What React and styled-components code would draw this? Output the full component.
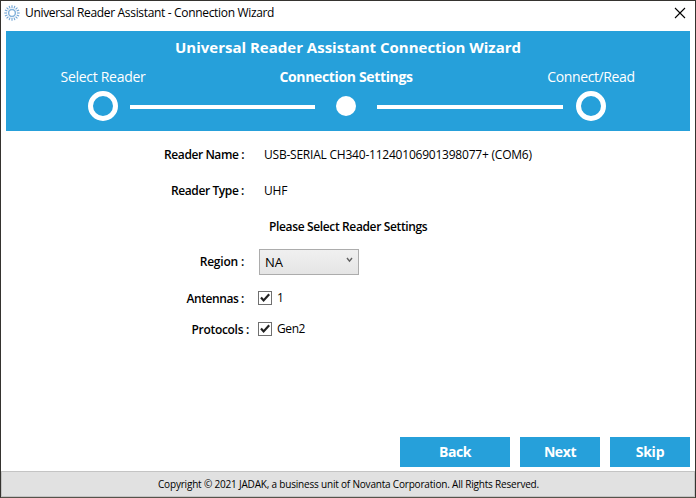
import React, { useState } from "react";
import styled, { createGlobalStyle } from "styled-components";

const BLUE = "#26a0da";

const GlobalStyle = createGlobalStyle`
  *, *::before, *::after { box-sizing: border-box; }
  body { margin: 0; background: #fff; }
  button { font: inherit; }
`;

const Window = styled.div`
  width: 696px;
  height: 498px;
  display: flex;
  flex-direction: column;
  border: 1px solid #35332f;
  border-bottom-color: #56534a;
  background: #fff;
  color: #000;
  font-family: "Open Sans", "Noto Sans", sans-serif;
  font-size: 12px;
  white-space: nowrap;
  overflow: hidden;
`;

const Text = styled.span`
  letter-spacing: ${(p) => p.$spacing || 0}px;
`;

const TitleBar = styled.header`
  height: 30px;
  flex: none;
  display: flex;
  align-items: flex-start;
  padding: 3px 9px 0 3px;
`;

const AppIcon = styled.svg`
  width: 16px;
  height: 16px;
  margin-top: 1px;
`;

const Title = styled.h1`
  margin: 0 auto 0 5px;
  font-size: 12px;
  font-weight: 400;
  line-height: 18px;
`;

const CloseButton = styled.button`
  width: 12px;
  height: 12px;
  margin-top: 3px;
  padding: 0;
  border: 0;
  background: none;
  svg { display: block; }
`;

const Banner = styled.section`
  height: 100px;
  flex: none;
  margin: 0 5px;
  background: ${BLUE};
  color: #fff;
`;

const BannerTitle = styled.h2`
  margin: 0;
  padding-top: 5px;
  font-size: 15px;
  font-weight: 700;
  line-height: 22px;
  text-align: center;
`;

const Steps = styled.div`
  display: grid;
  grid-template-columns: 194px 292px 198px;
  margin-top: 9px;
  font-size: 14px;
  line-height: 20px;
  text-align: center;
`;

const StepLabel = styled.div`
  font-weight: ${(p) => (p.$current ? 700 : 400)};
`;

const Track = styled.div`
  display: flex;
  align-items: center;
  height: 30px;
  margin-top: 4px;
  padding-left: 82px;
`;

const Ring = styled.div`
  width: 30px;
  height: 30px;
  border: 5px solid #fff;
  border-radius: 50%;
`;

const Dot = styled.div`
  width: 20px;
  height: 20px;
  border-radius: 50%;
  background: #fff;
`;

const Line = styled.div`
  width: ${(p) => p.$width}px;
  height: 4px;
  margin: 1px ${(p) => p.$right}px 0 ${(p) => p.$left}px;
  background: #fff;
`;

const Form = styled.main`
  flex: 1;
  display: grid;
  grid-template-columns: 243px 1fr;
  grid-template-rows: 36px 36px 36px 35px 38px 24px;
  padding-top: 5px;
  align-items: center;
`;

const Label = styled.div`
  justify-self: end;
  margin-right: ${(p) => p.$shift || 0}px;
  font-weight: 600;
`;

const Value = styled.div`
  padding-left: 20px;
`;

const FormHeading = styled.div`
  grid-column: 2;
  padding-left: 25px;
  font-weight: 600;
`;

const Select = styled.button`
  display: flex;
  align-items: center;
  justify-content: space-between;
  width: 100px;
  height: 26px;
  margin-left: 15px;
  padding: 0 5px;
  border: 1px solid #acacac;
  background: linear-gradient(#f0f0f0, #e5e5e5);
  color: #000;
  font-size: 13px;
`;

const Chevron = styled.svg`
  width: 7px;
  height: 6px;
  margin-top: -3px;
`;

const CheckRow = styled.label`
  display: flex;
  align-items: center;
  gap: 5px;
  margin: -1px 0 0 14px;
`;

const Box = styled.button`
  width: 14px;
  height: 14px;
  padding: 0;
  border: 1px solid #707070;
  background: #fff;
  svg { display: block; }
`;

const Actions = styled.div`
  display: flex;
  justify-content: flex-end;
  gap: 10px;
  padding: 0 5px 4px 0;
`;

const Action = styled.button`
  width: ${(p) => p.$width}px;
  height: 30px;
  padding: 0 0 1px;
  border: 0;
  background: ${BLUE};
  color: #fff;
  font-size: 14px;
  font-weight: 700;
`;

const Footer = styled.footer`
  height: 26px;
  flex: none;
  border: 1px solid #c4c4c4;
  background: #e1e1e1;
  font-size: 10px;
  line-height: 24px;
  text-align: center;
  padding-left: 1px;
`;

const rays = Array.from({ length: 16 }, (_, i) => i * 22.5);

function Sunburst() {
  return (
    <AppIcon viewBox="0 0 16 16">
      <circle cx="8" cy="8" r="3.4" fill="none" stroke="#86b4dc" strokeWidth="1.5" />
      {rays.map((angle) => (
        <line key={angle} x1="8" y1="3" x2="8" y2="0.3" stroke="#6fa3d4"
          strokeWidth="1.1" transform={`rotate(${angle} 8 8)`} />
      ))}
    </AppIcon>
  );
}

function Checkbox({ label, spacing }) {
  const [checked, setChecked] = useState(true);
  return (
    <CheckRow>
      <Box type="button" onClick={() => setChecked(!checked)}>
        {checked && (
          <svg width="12" height="12" viewBox="0 0 12 12">
            <path d="M2 5.5 L4.6 8.4 L10.2 2.3" fill="none" stroke="#212121" strokeWidth="2.2" />
          </svg>
        )}
      </Box>
      <Text $spacing={spacing}>{label}</Text>
    </CheckRow>
  );
}

export default function App() {
  return (
    <>
      <GlobalStyle />
      <Window>
        <TitleBar>
          <Sunburst />
          <Title>
            <Text $spacing={-0.33}>Universal Reader Assistant - Connection Wizard</Text>
          </Title>
          <CloseButton type="button" aria-label="Close">
            <svg width="12" height="12" viewBox="0 0 12 12">
              <path d="M1 1 L11 11 M11 1 L1 11" stroke="#000" strokeWidth="1.1" />
            </svg>
          </CloseButton>
        </TitleBar>

        <Banner>
          <BannerTitle>
            <Text>Universal Reader Assistant Connection Wizard</Text>
          </BannerTitle>
          <Steps>
            <StepLabel><Text $spacing={-0.3}>Select Reader</Text></StepLabel>
            <StepLabel $current><Text $spacing={-0.35}>Connection Settings</Text></StepLabel>
            <StepLabel><Text $spacing={-0.38}>Connect/Read</Text></StepLabel>
          </Steps>
          <Track>
            <Ring />
            <Line $width={185} $left={12} $right={21} />
            <Dot />
            <Line $width={186} $left={21} $right={13} />
            <Ring />
          </Track>
        </Banner>

        <Form>
          <Label><Text $spacing={-0.42}>Reader Name :</Text></Label>
          <Value>
            <Text $spacing={-0.22}>USB-SERIAL CH340-11240106901398077+ (COM6)</Text>
          </Value>
          <Label><Text $spacing={-0.4}>Reader Type :</Text></Label>
          <Value><Text $spacing={-0.2}>UHF</Text></Value>
          <FormHeading><Text $spacing={-0.36}>Please Select Reader Settings</Text></FormHeading>
          <Label><Text $spacing={-0.2}>Region :</Text></Label>
          <Select type="button">
            NA
            <Chevron viewBox="0 0 7 6">
              <path d="M1 1 L3.5 4.2 L6 1" fill="none" stroke="#606060" strokeWidth="1.4" />
            </Chevron>
          </Select>
          <Label><Text $spacing={-0.42}>Antennas :</Text></Label>
          <Checkbox label="1" />
          <Label $shift={-5}><Text $spacing={-0.3}>Protocols :</Text></Label>
          <Checkbox label="Gen2" spacing={-0.4} />
        </Form>

        <Actions>
          <Action type="button" $width={110}><Text $spacing={-0.4}>Back</Text></Action>
          <Action type="button" $width={80}><Text $spacing={-0.4}>Next</Text></Action>
          <Action type="button" $width={80}><Text $spacing={-0.2}>Skip</Text></Action>
        </Actions>

        <Footer>
          <Text $spacing={-0.19}>
            Copyright © 2021 JADAK, a business unit of Novanta Corporation. All Rights Reserved.
          </Text>
        </Footer>
      </Window>
    </>
  );
}
